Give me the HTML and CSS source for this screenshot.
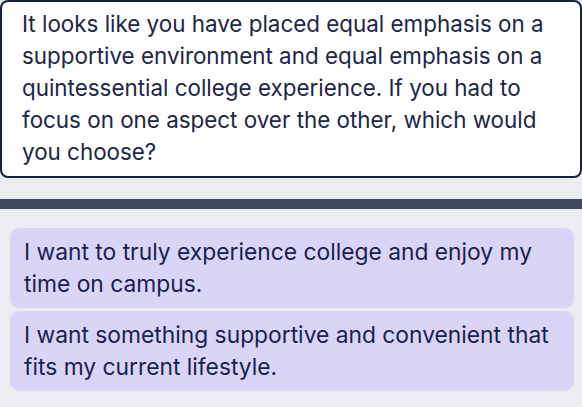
FILE: index.html
```html
<!DOCTYPE html>
<html>
<head>
<meta charset="utf-8">
<link rel="stylesheet" href="styles.css">
</head>
<body>
<div class="page">
  <div class="question">It looks like you have placed equal emphasis on a supportive environment and equal emphasis on a quintessential college experience. If you had to focus on one aspect over the other, which would you choose?</div>
  <div class="divider"></div>
  <div class="options">
    <div class="option">I want to truly experience college and enjoy my time on campus.</div>
    <div class="option">I want something supportive and convenient that fits my current lifestyle.</div>
  </div>
</div>
</body>
</html>
```
FILE: styles.css
```css
html, body {
  margin: 0;
  padding: 0;
  background: #ebecef;
}
.page {
  width: 582px;
  font-family: Inter, "Noto Sans", sans-serif;
  font-size: 22.4px;
  line-height: 32px;
}
.question {
  box-sizing: border-box;
  background: #ffffff;
  border: 2px solid #14233f;
  border-radius: 8px;
  padding: 6px 20px 8px 20px;
  color: #1b2648;
  height: 178px;
}
.divider {
  margin-top: 21px;
  height: 10px;
  background: #3f4960;
}
.options {
  display: flex;
  flex-direction: column;
  gap: 3px;
  padding: 19px 8px 0 10px;
}
.option {
  background: #dad4f6;
  border-radius: 9px;
  padding: 8px 14px;
  color: #1a1f4e;
  font-size: 22.8px;
}
```
